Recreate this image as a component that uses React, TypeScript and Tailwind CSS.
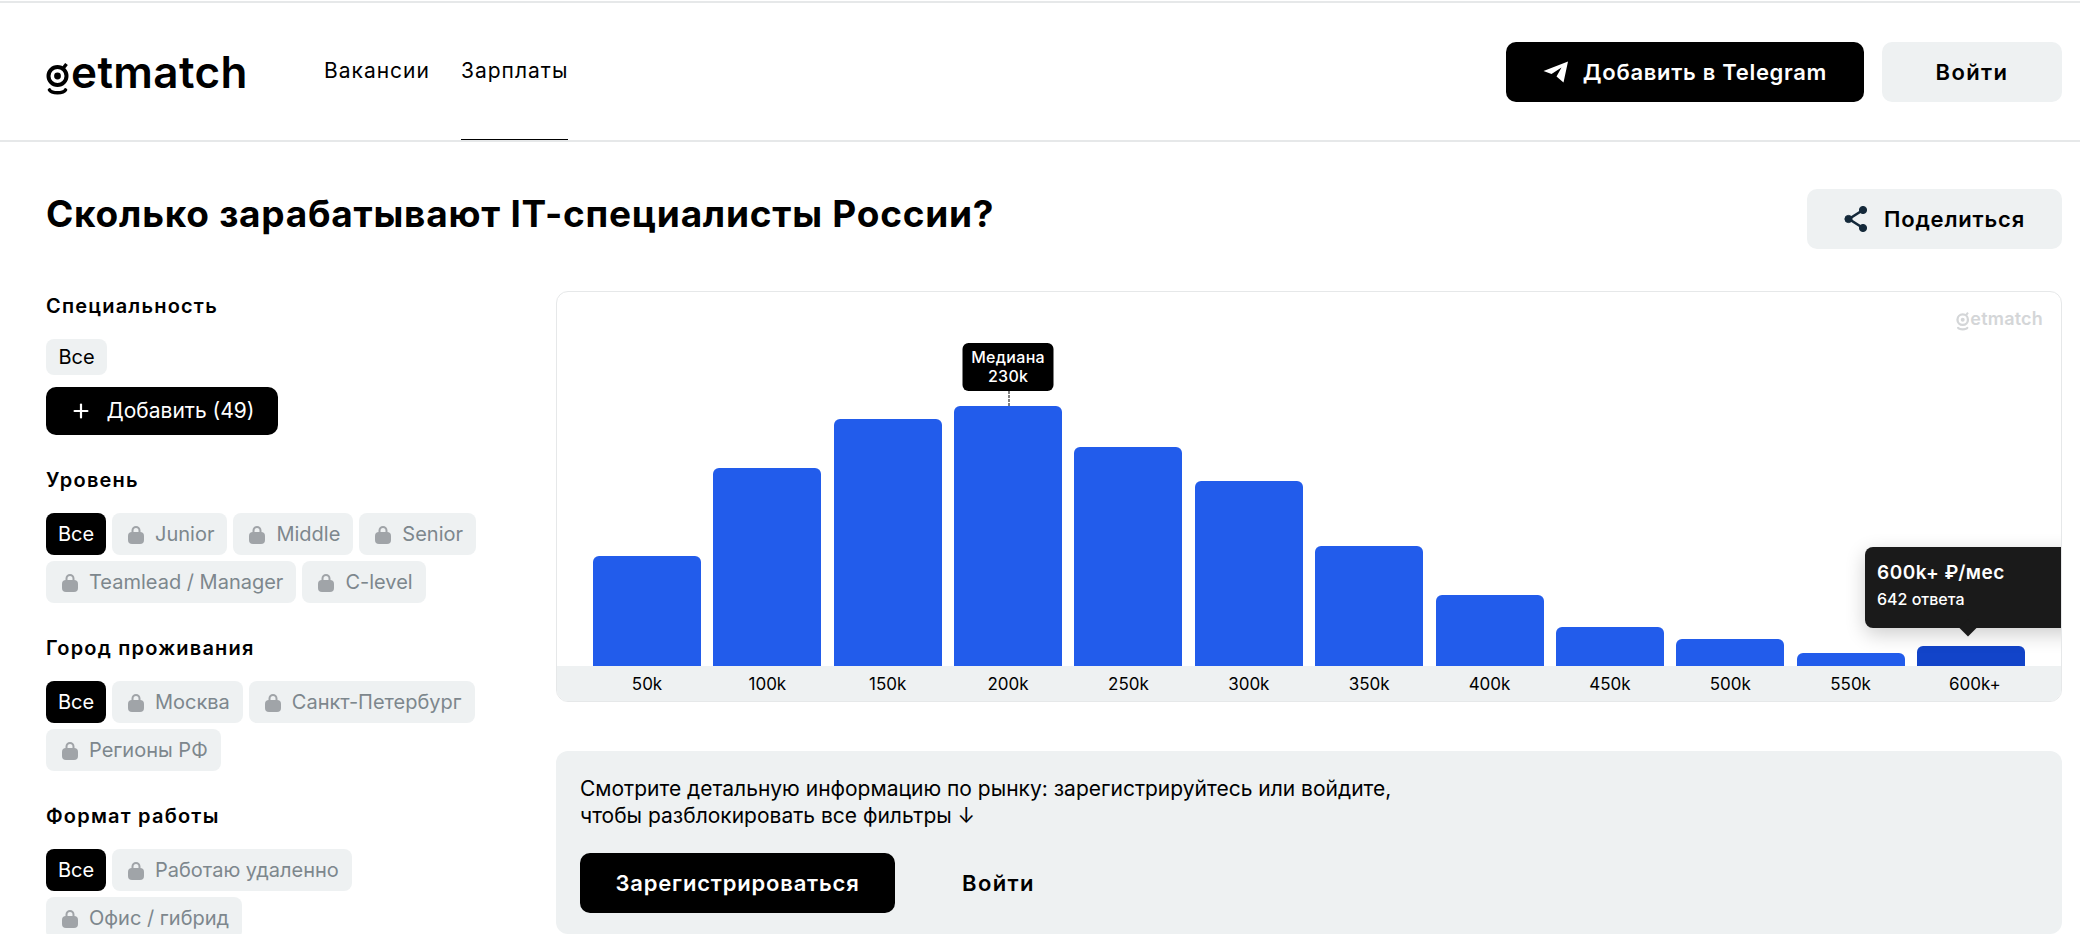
import { Plus } from "lucide-react";

type ChipItem = { label: string; active?: boolean; locked?: boolean };

const levels: ChipItem[] = [
  { label: "Все", active: true },
  { label: "Junior", locked: true },
  { label: "Middle", locked: true },
  { label: "Senior", locked: true },
  { label: "Teamlead / Manager", locked: true },
  { label: "C-level", locked: true },
];

const cities: ChipItem[] = [
  { label: "Все", active: true },
  { label: "Москва", locked: true },
  { label: "Санкт-Петербург", locked: true },
  { label: "Регионы РФ", locked: true },
];

const formats: ChipItem[] = [
  { label: "Все", active: true },
  { label: "Работаю удаленно", locked: true },
  { label: "Офис / гибрид", locked: true },
];

const bars = [
  { label: "50k", height: 110 },
  { label: "100k", height: 198 },
  { label: "150k", height: 247 },
  { label: "200k", height: 260, median: true },
  { label: "250k", height: 219 },
  { label: "300k", height: 185 },
  { label: "350k", height: 120 },
  { label: "400k", height: 71 },
  { label: "450k", height: 39 },
  { label: "500k", height: 27 },
  { label: "550k", height: 13 },
  { label: "600k+", height: 20, selected: true },
];

const headingFont = "font-['Inter',sans-serif] font-semibold";

function LockIcon() {
  return (
    <svg width="16" height="19" viewBox="0 0 16 19" fill="none" className="shrink-0">
      <path d="M4.5 9V5.5a3.5 3.5 0 0 1 7 0V9" stroke="#a0a4a8" strokeWidth="2" />
      <rect x="0" y="7" width="16" height="12" rx="4" fill="#a0a4a8" />
    </svg>
  );
}

function LogoMark({ className }: { className?: string }) {
  return (
    <svg width="24" height="34" viewBox="0 0 24 34" fill="none" className={className}>
      <circle cx="11.5" cy="13" r="9" stroke="currentColor" strokeWidth="4" />
      <circle cx="11.5" cy="13" r="3.4" fill="currentColor" />
      <path d="M17 5.5 20.5 1" stroke="currentColor" strokeWidth="3.4" />
      <path d="M3.5 27c2 3.6 14 3.6 16 0" stroke="currentColor" strokeWidth="3.6" strokeLinecap="round" />
    </svg>
  );
}

function Chip({ label, active, locked }: ChipItem) {
  if (active) {
    return (
      <span className="flex h-[42px] w-[60px] items-center justify-center rounded-lg bg-black text-[20px] text-white">
        {label}
      </span>
    );
  }
  return (
    <span className="flex h-[42px] items-center gap-[11px] rounded-lg bg-[#eef1f2] pl-4 pr-[13px] text-[20px] text-[#7d878d]">
      {locked && <LockIcon />}
      {label}
    </span>
  );
}

function FilterGroup({ title, items }: { title: string; items: ChipItem[] }) {
  return (
    <div className="mt-[33px]">
      <h3 className={`${headingFont} h-6 text-[20px] leading-6 tracking-[1.2px] text-black`}>{title}</h3>
      <div className="mt-[21px] flex w-[450px] flex-wrap gap-[6px]">
        {items.map((item) => (
          <Chip key={item.label} {...item} />
        ))}
      </div>
    </div>
  );
}

export default function App() {
  return (
    <div className="h-[934px] overflow-hidden bg-white pt-px font-['Inter',sans-serif] text-black">
      <header className="flex h-[141px] items-center border-t-2 border-b-2 border-[#e6e8e9] pl-[46px] pr-[18px] pt-px">
        <div className="flex w-[278px] items-start text-black">
          <LogoMark className="mt-[15px] shrink-0" />
          <span className="ml-px text-[44px] font-semibold leading-[48px] tracking-[0.4px]">etmatch</span>
        </div>
        <nav className="flex h-full gap-[31px] text-[21px] tracking-[1px]">
          <a className="flex h-full items-center pb-[3px]">Вакансии</a>
          <a className="flex h-full items-center border-b border-black pb-[2px]">Зарплаты</a>
        </nav>
        <div className="ml-auto flex gap-[18px]">
          <button className={`${headingFont} flex h-[60px] w-[358px] items-center justify-center gap-[14px] rounded-[10px] bg-black text-[22px] tracking-[0.7px] text-white`}>
            <svg width="26" height="22" viewBox="0 0 26 22" fill="white">
              <path d="M25 0.5 20.5 21.5 13.5 15.5 18.5 6.5 8.5 13 0.5 10Z" />
            </svg>
            Добавить в Telegram
          </button>
          <button className={`${headingFont} h-[60px] w-[180px] rounded-[10px] bg-[#eef1f2] text-[22px] tracking-[1.4px]`}>
            Войти
          </button>
        </div>
      </header>

      <main className="pl-[46px] pr-[18px] pt-[47px]">
        <div className="flex h-[60px] items-start justify-between">
          <h1 className="mt-[2px] text-[37px] font-bold leading-[46px] tracking-[0.75px]">
            Сколько зарабатывают IT-специалисты России?
          </h1>
          <button className={`${headingFont} flex h-[60px] w-[255px] items-center justify-center gap-[16px] rounded-[10px] bg-[#eef1f2] text-[22px] tracking-[0.8px]`}>
            <svg width="24" height="28" viewBox="0 0 24 28" fill="#14293a" stroke="#14293a">
              <path d="M19 5 5 14l14 9" fill="none" strokeWidth="2.6" />
              <circle cx="19" cy="5" r="3.6" />
              <circle cx="4.5" cy="14" r="3.6" />
              <circle cx="19" cy="23" r="3.6" />
            </svg>
            Поделиться
          </button>
        </div>

        <div className="mt-[42px] flex">
          <aside className="w-[510px] shrink-0 pt-[3px]">
            <h3 className={`${headingFont} h-6 text-[20px] leading-6 tracking-[1.2px]`}>Специальность</h3>
            <span className="mt-[21px] flex h-9 w-[61px] items-center justify-center rounded-lg bg-[#eef1f2] text-[20px]">
              Все
            </span>
            <button className="mt-3 flex h-12 w-[232px] items-center justify-center gap-[15px] rounded-[10px] bg-black text-[21px] text-white">
              <Plus size={22} strokeWidth={2.4} />
              Добавить (49)
            </button>
            <FilterGroup title="Уровень" items={levels} />
            <FilterGroup title="Город проживания" items={cities} />
            <FilterGroup title="Формат работы" items={formats} />
          </aside>

          <section className="min-w-0 flex-1">
            <div className="relative h-[411px] overflow-hidden rounded-xl border border-[#e6e8e9]">
              <div className="absolute right-[18px] top-[15px] flex items-start text-[#d4d6d8]">
                <LogoMark className="mt-[4px] h-[22px] w-[14px] shrink-0" />
                <span className="text-[18px] font-semibold leading-6 tracking-[0.2px]">etmatch</span>
              </div>

              <div className="flex h-[374px] items-end gap-[12.36px] px-9">
                {bars.map((bar) => (
                  <div
                    key={bar.label}
                    style={{ height: bar.height }}
                    className={`relative w-[108px] rounded-t-md ${bar.selected ? "bg-[#1244c9]" : "bg-[#225ceb]"}`}
                  >
                    {bar.median && (
                      <div className="absolute bottom-full left-1/2 mb-[15px] w-[91px] -translate-x-1/2 rounded-md bg-black py-[5px] text-center text-[16px] font-medium leading-[19px] tracking-[0.3px] text-white">
                        Медиана
                        <br />
                        230k
                        <div className="absolute left-1/2 top-full h-[15px] border-l border-dashed border-black" />
                      </div>
                    )}
                  </div>
                ))}
              </div>

              <div className="flex h-9 items-center gap-[12.36px] bg-[#eef1f2] px-9">
                {bars.map((bar) => (
                  <span
                    key={bar.label}
                    className={`w-[108px] text-center text-[17px] leading-5 ${bar.selected ? "pl-2" : ""}`}
                  >
                    {bar.label}
                  </span>
                ))}
              </div>

              <div className="absolute left-[1308px] top-[255px] h-[81px] w-[230px] rounded-lg bg-[#1a1a1a] pl-3 pt-[13px] text-white shadow-[0_6px_20px_rgba(0,0,0,0.2)]">
                <div className={`${headingFont} text-[19px] leading-[26px] tracking-[0.5px]`}>600k+ ₽/мес</div>
                <div className="mt-[3px] text-[16px] font-medium leading-5">642 ответа</div>
                <div className="absolute left-[97px] top-[75px] h-3 w-3 rotate-45 bg-[#1a1a1a]" />
              </div>
            </div>

            <div className="mt-[49px] h-[183px] rounded-xl bg-[#eef1f2] px-6 pt-6">
              <p className="text-[21px] leading-[27px]">
                Смотрите детальную информацию по рынку: зарегистрируйтесь или войдите,
                <br />
                чтобы разблокировать все фильтры ↓
              </p>
              <div className="mt-6 flex items-center">
                <button className={`${headingFont} h-[60px] w-[315px] rounded-[10px] bg-black text-[22px] tracking-[0.8px] text-white`}>
                  Зарегистрироваться
                </button>
                <button className={`${headingFont} ml-[67px] text-[22px] tracking-[1.4px]`}>Войти</button>
              </div>
            </div>
          </section>
        </div>
      </main>
    </div>
  );
}
